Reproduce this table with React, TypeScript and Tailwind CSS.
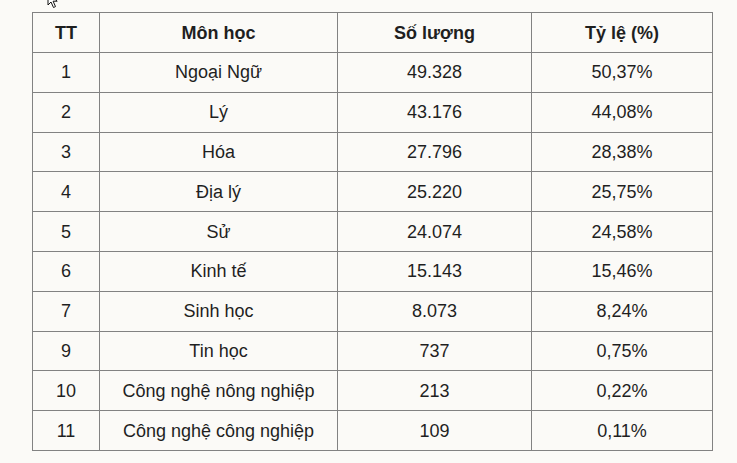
const rows: [string, string, string, string][] = [
  ["1", "Ngoại Ngữ", "49.328", "50,37%"],
  ["2", "Lý", "43.176", "44,08%"],
  ["3", "Hóa", "27.796", "28,38%"],
  ["4", "Địa lý", "25.220", "25,75%"],
  ["5", "Sử", "24.074", "24,58%"],
  ["6", "Kinh tế", "15.143", "15,46%"],
  ["7", "Sinh học", "8.073", "8,24%"],
  ["9", "Tin học", "737", "0,75%"],
  ["10", "Công nghệ nông nghiệp", "213", "0,22%"],
  ["11", "Công nghệ công nghiệp", "109", "0,11%"],
];

const cell = "border border-[#828282] text-center align-middle p-0";

function Cursor() {
  // only the lower half of the pointer is visible at the top edge
  return (
    <svg className="absolute left-[47px] top-[-8px]" width="12" height="17" viewBox="0 0 12 17">
      <path d="M1 1 L1 13 L4 10 L6.5 15.5 L8.5 14.6 L6.1 9.2 L10.2 9.2 Z" fill="#fff" stroke="#111" strokeWidth="1" strokeLinejoin="round" />
    </svg>
  );
}

export default function App() {
  return (
    <div className="relative min-h-[463px] w-[737px] bg-[#fbfaf7] pt-3 pl-8 font-['Liberation_Sans',Arial,sans-serif] text-[18px] leading-[22px] text-[#1f1f1f]">
      <Cursor />
      <table className="w-[680px] table-fixed border-collapse">
        <colgroup>
          <col className="w-[67px]" />
          <col className="w-[238px]" />
          <col className="w-[194px]" />
          <col className="w-[181px]" />
        </colgroup>
        <thead>
          <tr className="h-[40px]">
            <th className={`${cell} font-bold`}>TT</th>
            <th className={`${cell} font-bold`}>Môn học</th>
            <th className={`${cell} font-bold`}>Số lượng</th>
            <th className={`${cell} font-bold`}>Tỷ lệ (%)</th>
          </tr>
        </thead>
        <tbody>
          {rows.map((r) => (
            <tr key={r[0]} className="h-[39.8px]">
              {r.map((v, i) => (
                <td key={i} className={cell}>
                  {v}
                </td>
              ))}
            </tr>
          ))}
        </tbody>
      </table>
    </div>
  );
}
